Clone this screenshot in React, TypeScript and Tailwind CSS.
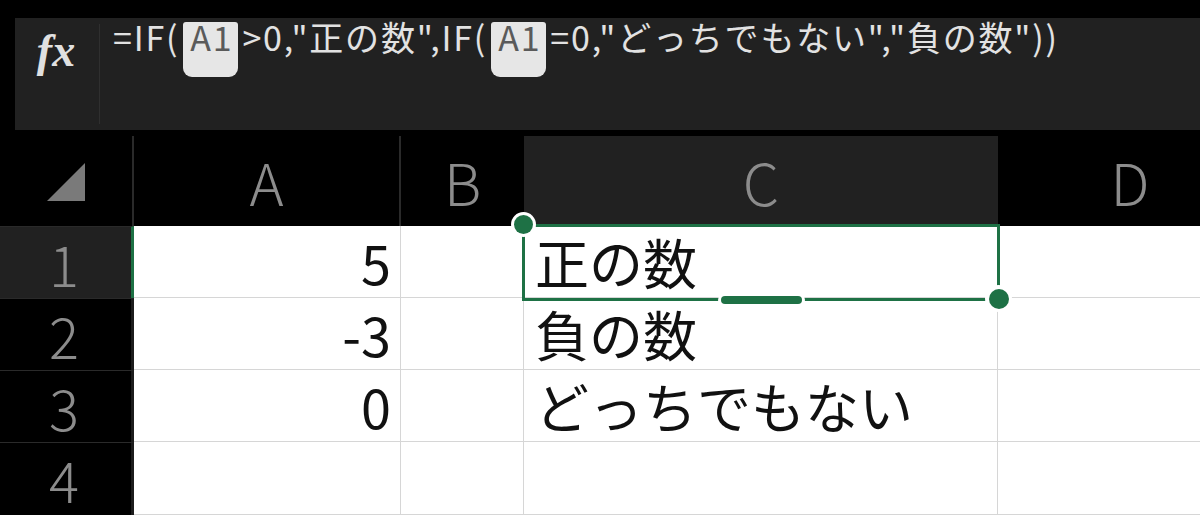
import React from 'react';

const GREEN = '#1e7145';

function Ref({ children }: { children: React.ReactNode }) {
  return (
    <span className="h-[55px] mx-[4px] pl-[7px] pr-[5px] rounded-t-[3px] rounded-b-[9px] bg-[#e6e6e6] text-[#5a5a5a]">
      {children}
    </span>
  );
}

function FormulaBar() {
  return (
    <div className="h-[130px] pt-[18px] pl-[15px]">
      <div className="h-[112px] bg-[#212121] flex">
        <div className="w-[84px] flex justify-center pt-[10px]">
          <span className="font-['Liberation_Serif',serif] italic font-bold text-[46px] leading-[46px] text-[#e0e0e0] pr-[2px]">
            fx
          </span>
        </div>
        <div className="w-px my-[6px] bg-[#2f2f2f]" />
        <div className="pl-[13px] pt-[4px] flex items-start text-[34px] leading-[30px] tracking-[1.8px] text-[#e2e2e2] whitespace-nowrap">
          <span>=IF(</span>
          <Ref>A1</Ref>
          <span>&gt;0,"正の数",IF(</span>
          <Ref>A1</Ref>
          <span>=0,"どっちでもない","負の数"))</span>
        </div>
      </div>
    </div>
  );
}

function ColHead({ label, active, divider }: { label: string; active?: boolean; divider?: boolean }) {
  return (
    <div
      className={
        'flex items-center justify-center text-[58px] font-light leading-none text-[#8c8c8c] ' +
        (active ? 'bg-[#212121] ' : 'bg-black ') +
        (divider ? 'border-r-2 border-[#2a2a2a]' : '')
      }
    >
      {label}
    </div>
  );
}

function RowHead({ n, active }: { n: number; active?: boolean }) {
  return (
    <div
      className={
        'flex items-center justify-center text-[56px] font-light leading-none text-[#8c8c8c] border-t border-[#2a2a2a] border-r-[3px] ' +
        (active ? 'bg-[#212121] border-r-[#1e7145]' : 'bg-black border-r-[#1c1c1c]')
      }
    >
      <span className="pr-[3px]">{n}</span>
    </div>
  );
}

function Cell({ children, right }: { children?: React.ReactNode; right?: boolean }) {
  return (
    <div
      className={
        'bg-white border-r border-b border-[#d6d6d6] flex items-center text-[54px] leading-none text-[#111] whitespace-nowrap ' +
        (right ? 'justify-end pr-[9px]' : 'pl-[11px]')
      }
    >
      {children}
    </div>
  );
}

const rows: [string, string][] = [
  ['5', '正の数'],
  ['-3', '負の数'],
  ['0', 'どっちでもない'],
  ['', ''],
];

export default function App() {
  return (
    <div className="w-[1200px] h-[515px] bg-black overflow-hidden font-['Noto_Sans_CJK_JP','Noto_Sans',sans-serif]">
      <FormulaBar />
      <div className="relative mt-[6px] grid grid-cols-[134px_267px_123px_474px_264px] grid-rows-[90px_72px_72px_72px_73px] w-[1262px]">
        <div className="bg-black border-r-2 border-[#2a2a2a] flex items-center justify-center">
          <svg width="38" height="38" viewBox="0 0 38 38" className="ml-[-1px] mt-[2px]">
            <polygon points="38,0 38,38 0,38" fill="#7a7a7a" />
          </svg>
        </div>
        <ColHead label="A" divider />
        <ColHead label="B" />
        <ColHead label="C" active />
        <ColHead label="D" />

        {rows.map(([a, c], i) => (
          <React.Fragment key={i}>
            <RowHead n={i + 1} active={i === 0} />
            <Cell right>{a}</Cell>
            <Cell />
            <Cell>{c}</Cell>
            <Cell />
          </React.Fragment>
        ))}

        {/* selection frame on C1 */}
        <div className="absolute left-[522px] top-[88px] w-[478px] h-[77px] border-[3px]" style={{ borderColor: GREEN }} />
        <div className="absolute left-[511px] top-[76px] w-[25px] h-[25px] rounded-full bg-white flex items-center justify-center">
          <div className="w-[19px] h-[19px] rounded-full bg-[#1e7145]" />
        </div>
        <div className="absolute left-[985px] top-[149px] w-[27px] h-[27px] rounded-full bg-white flex items-center justify-center">
          <div className="w-[20px] h-[20px] rounded-full bg-[#1e7145]" />
        </div>
        <div className="absolute left-[718px] top-[157px] w-[87px] h-[14px] rounded-full bg-white flex items-center justify-center">
          <div className="w-[81px] h-[8px] rounded-full bg-[#1e7145]" />
        </div>
      </div>
    </div>
  );
}
